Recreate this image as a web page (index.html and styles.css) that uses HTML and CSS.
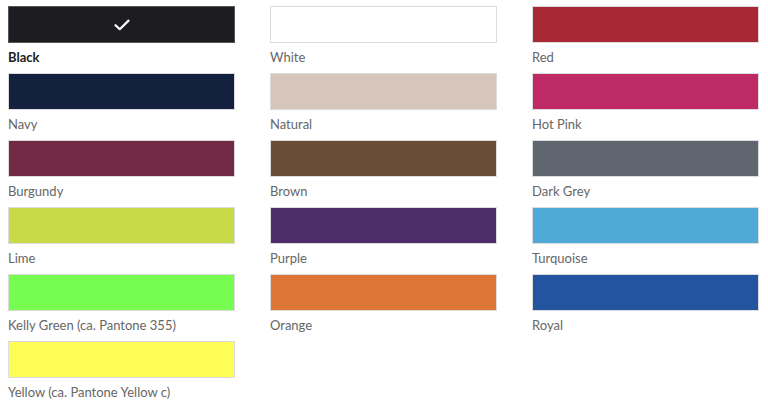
FILE: index.html
```html
<!DOCTYPE html>
<html lang="en">
<head>
  <meta charset="UTF-8">
  <title>Colours</title>
  <link rel="stylesheet" href="styles.css">
</head>
<body>
  <div class="swatches">
    <div class="swatch selected">
      <div class="chip" style="background:#1d1d21">
        <svg class="check" width="16" height="12" viewBox="0 0 16 12"><path d="M1.5 6.2 L5.8 10.2 L14.5 1.6" fill="none" stroke="#fff" stroke-width="2.2" stroke-linecap="round" stroke-linejoin="round"/></svg>
      </div>
      <div class="label">Black</div>
    </div>
    <div class="swatch">
      <div class="chip" style="background:#ffffff"></div>
      <div class="label">White</div>
    </div>
    <div class="swatch">
      <div class="chip" style="background:#a82935"></div>
      <div class="label">Red</div>
    </div>
    <div class="swatch">
      <div class="chip" style="background:#13213f"></div>
      <div class="label">Navy</div>
    </div>
    <div class="swatch">
      <div class="chip" style="background:#d6c5bb"></div>
      <div class="label">Natural</div>
    </div>
    <div class="swatch">
      <div class="chip" style="background:#bd2a66"></div>
      <div class="label">Hot Pink</div>
    </div>
    <div class="swatch">
      <div class="chip" style="background:#722945"></div>
      <div class="label">Burgundy</div>
    </div>
    <div class="swatch">
      <div class="chip" style="background:#6b4c37"></div>
      <div class="label">Brown</div>
    </div>
    <div class="swatch">
      <div class="chip" style="background:#5f6670"></div>
      <div class="label">Dark Grey</div>
    </div>
    <div class="swatch">
      <div class="chip" style="background:#c9da48"></div>
      <div class="label">Lime</div>
    </div>
    <div class="swatch">
      <div class="chip" style="background:#4e2d6a"></div>
      <div class="label">Purple</div>
    </div>
    <div class="swatch">
      <div class="chip" style="background:#4faad8"></div>
      <div class="label">Turquoise</div>
    </div>
    <div class="swatch">
      <div class="chip" style="background:#77fd50"></div>
      <div class="label">Kelly Green (ca. Pantone 355)</div>
    </div>
    <div class="swatch">
      <div class="chip" style="background:#dd7536"></div>
      <div class="label">Orange</div>
    </div>
    <div class="swatch">
      <div class="chip" style="background:#22549f"></div>
      <div class="label">Royal</div>
    </div>
    <div class="swatch">
      <div class="chip" style="background:#fefd55"></div>
      <div class="label">Yellow (ca. Pantone Yellow c)</div>
    </div>
  </div>
</body>
</html>
```

FILE: styles.css
```css
body {
  margin: 0;
  padding: 6px 0 0 8px;
  font-family: Lato, "Open Sans", sans-serif;
  background: #fff;
}
.swatches {
  width: 751px;
  display: grid;
  grid-template-columns: 1fr 1fr 1fr;
  column-gap: 35px;
}
.swatch {
  height: 67px;
}
.chip {
  height: 37px;
  box-sizing: border-box;
  border: 1px solid #dcdcdc;
  display: flex;
  align-items: center;
  justify-content: center;
}
.selected .chip {
  border-color: #55565a;
}
.label {
  padding-top: 4px;
  line-height: 20px;
  font-size: 13px;
  color: #666;
}
.selected .label {
  color: #222;
  font-weight: bold;
}
```
